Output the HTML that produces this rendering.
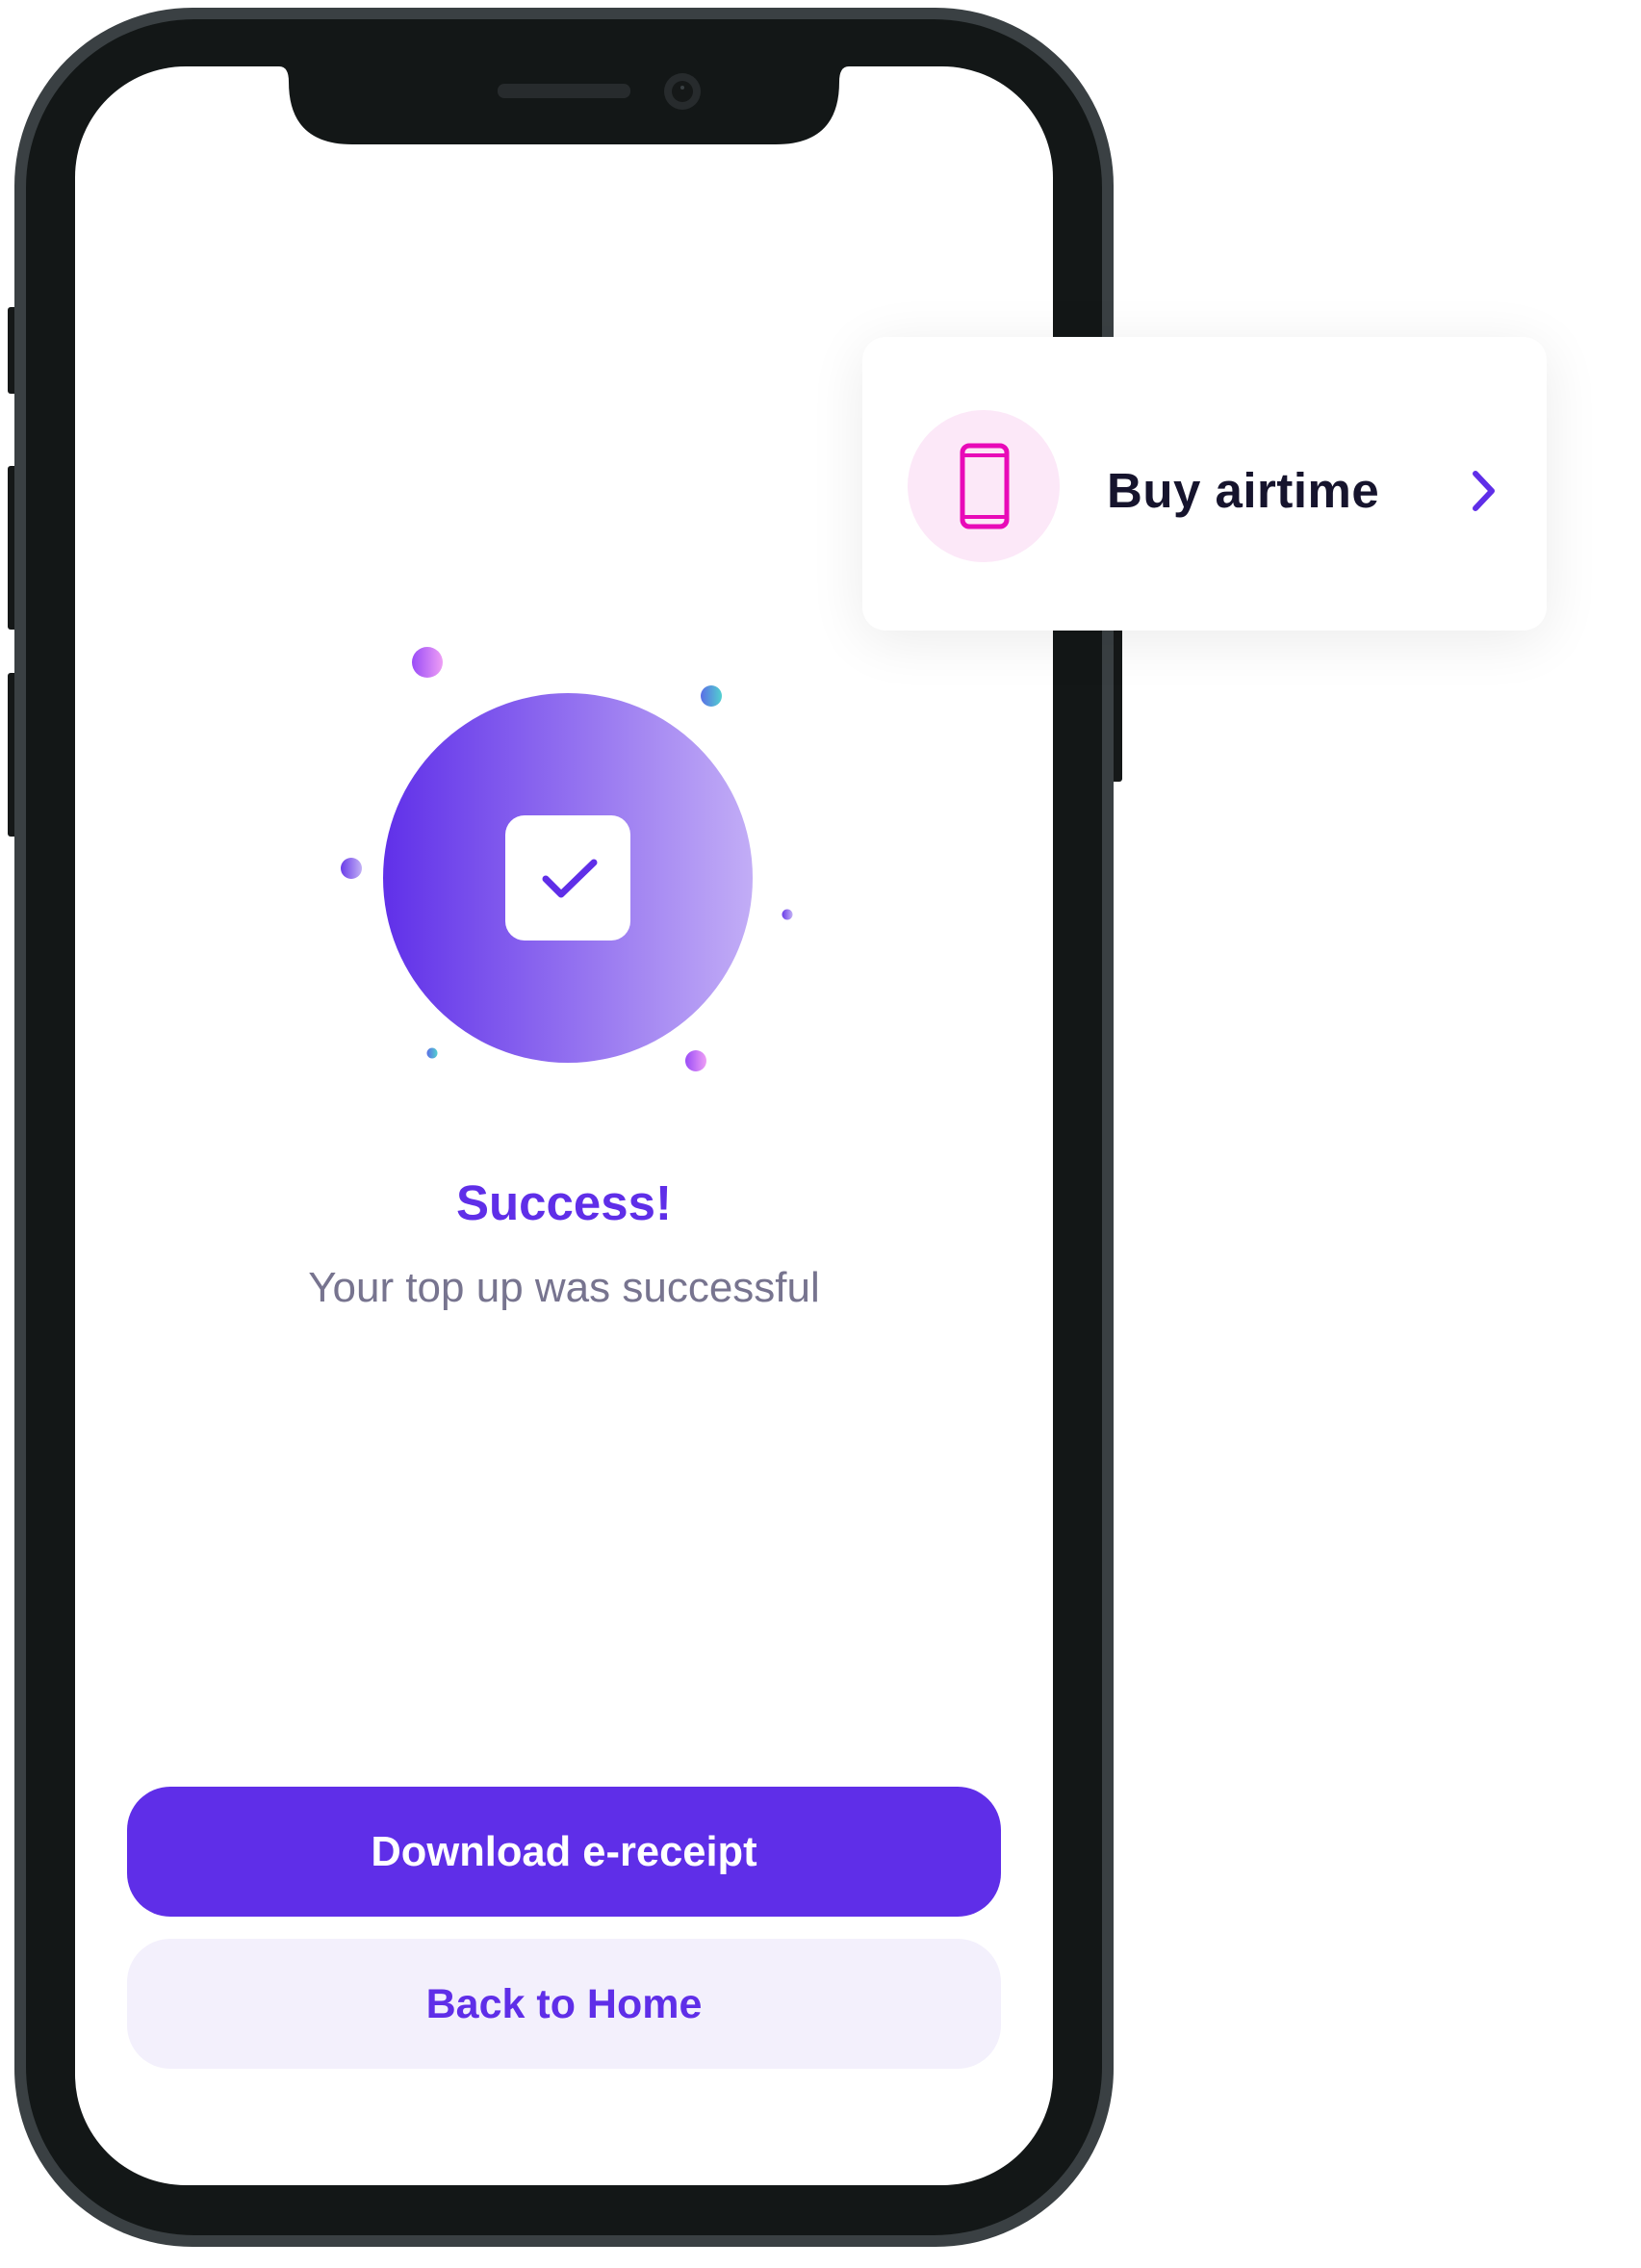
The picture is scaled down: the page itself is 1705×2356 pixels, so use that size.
<!DOCTYPE html>
<html><head><meta charset="utf-8"><style>
html,body{margin:0;padding:0;background:#fff;}
body{width:1705px;height:2356px;position:relative;overflow:hidden;font-family:"Liberation Sans",sans-serif;}
.abs{position:absolute;}
</style></head><body>
<svg class="abs" style="left:0;top:0" width="1705" height="2356" viewBox="0 0 1705 2356">
  <defs>
    <linearGradient id="big" x1="0" x2="1" y1="0" y2="0"><stop offset="0" stop-color="#6030e9"/><stop offset="1" stop-color="#c2adf6"/></linearGradient>
    <linearGradient id="pink" x1="0" x2="1"><stop offset="0" stop-color="#9a4cf7"/><stop offset="1" stop-color="#ee9ef5"/></linearGradient>
    <linearGradient id="teal" x1="0" x2="1"><stop offset="0" stop-color="#5b6ee6"/><stop offset="1" stop-color="#52d0d0"/></linearGradient>
    <linearGradient id="pur" x1="0" x2="1"><stop offset="0" stop-color="#6a3ce9"/><stop offset="1" stop-color="#c2b0f5"/></linearGradient>
    <filter id="sh" x="-30%" y="-50%" width="160%" height="200%"><feGaussianBlur stdDeviation="30"/></filter>
  </defs>
  <rect x="8" y="319" width="12" height="90" rx="3" fill="#151818"/>
  <rect x="8" y="484" width="12" height="170" rx="3" fill="#151818"/>
  <rect x="8" y="699" width="12" height="170" rx="3" fill="#151818"/>
  <rect x="1152" y="600" width="14" height="212" rx="3" fill="#151818"/>
  <rect x="15" y="8" width="1142" height="2326" rx="185" fill="#3a4043"/>
  <rect x="27" y="20" width="1118" height="2302" rx="175" fill="#131717"/>
  <rect x="78" y="69" width="1016" height="2201" rx="115" fill="#fff"/>
  <path d="M290 69 H882 Q872 69 872 85 Q872 150 806 150 H366 Q300 150 300 85 Q300 69 290 69 Z" fill="#131717"/>
  <rect x="517" y="87" width="138" height="15" rx="7" fill="#272b2d"/>
  <circle cx="709" cy="95" r="19" fill="#272b2d"/>
  <circle cx="709" cy="95" r="11" fill="#151818"/>
  <circle cx="709" cy="91" r="2" fill="#3a4043"/>
  <rect x="896" y="360" width="711" height="305" rx="25" fill="#000" opacity="0.08" filter="url(#sh)"/>
  <circle cx="590" cy="912" r="192" fill="url(#big)"/>
  <rect x="525" y="847" width="130" height="130" rx="20" fill="#fff"/>
  <path d="M567 913 L583 929 L617 896" fill="none" stroke="#5f2ee8" stroke-width="7" stroke-linecap="round" stroke-linejoin="round"/>
  <circle cx="444" cy="688" r="16" fill="url(#pink)"/>
  <circle cx="739" cy="723" r="11" fill="url(#teal)"/>
  <circle cx="365" cy="902" r="11" fill="url(#pur)"/>
  <circle cx="818" cy="950" r="5.5" fill="url(#pur)"/>
  <circle cx="449" cy="1094" r="5.5" fill="url(#teal)"/>
  <circle cx="723" cy="1102" r="11" fill="url(#pink)"/>
  <rect x="896" y="350" width="711" height="305" rx="24" fill="#fff"/>
  <circle cx="1022" cy="505" r="79" fill="#fce8f8"/>
  <rect x="1000" y="463" width="46" height="84" rx="7" fill="none" stroke="#e80ab8" stroke-width="5"/>
  <line x1="1000" y1="473" x2="1046" y2="473" stroke="#e80ab8" stroke-width="4"/>
  <line x1="1000" y1="537" x2="1046" y2="537" stroke="#e80ab8" stroke-width="4"/>
  <path d="M1533 492 L1550 510 L1533 528" fill="none" stroke="#5f2ee8" stroke-width="6" stroke-linecap="round" stroke-linejoin="round"/>
  <rect x="132" y="1856" width="908" height="135" rx="45" fill="#5f2ee8"/>
  <rect x="132" y="2014" width="908" height="135" rx="45" fill="#f3f0fc"/>
</svg>
<div class="abs" style="left:1150px;top:480px;font-size:51px;font-weight:600;color:#16142d;line-height:60px;letter-spacing:0.5px;">Buy airtime</div>
<div class="abs" style="left:86px;width:1000px;text-align:center;top:1220px;font-size:51px;font-weight:bold;color:#5f2ee8;line-height:60px;">Success!</div>
<div class="abs" style="left:86px;width:1000px;text-align:center;top:1312px;font-size:44px;color:#77748f;line-height:52px;">Your top up was successful</div>
<div class="abs" style="left:132px;width:908px;text-align:center;top:1899px;font-size:43.5px;font-weight:bold;color:#fff;line-height:50px;">Download e-receipt</div>
<div class="abs" style="left:132px;width:908px;text-align:center;top:2057px;font-size:43px;font-weight:bold;color:#5f2ee8;line-height:50px;">Back to Home</div>
</body></html>
